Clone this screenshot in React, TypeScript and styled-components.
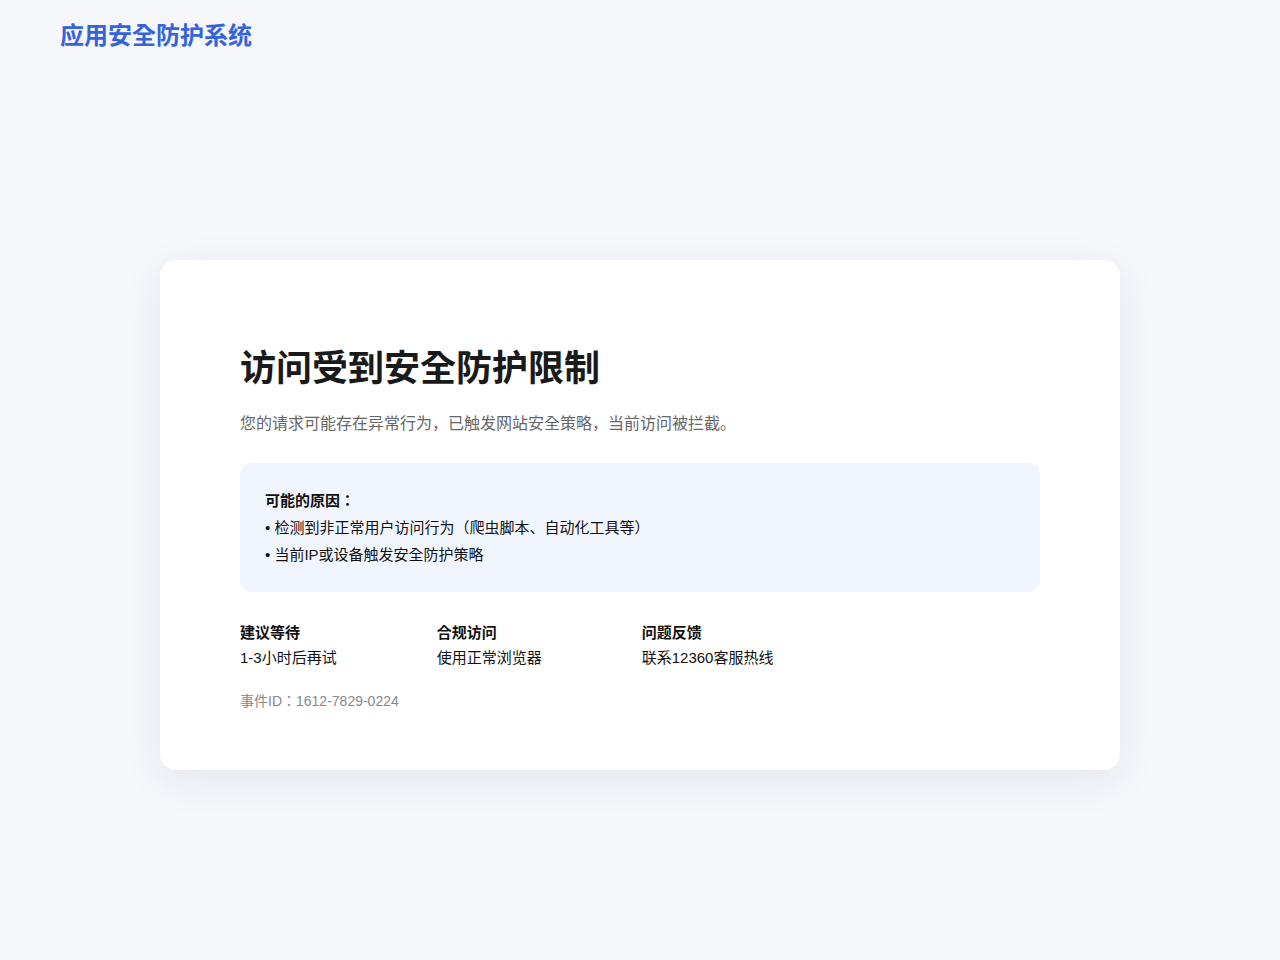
import React from "react";
import styled, { createGlobalStyle } from "styled-components";

const Global = createGlobalStyle`
  html, body { margin: 0; padding: 0; }
  body {
    background: #f5f7fb;
    font-family: "Liberation Sans", Arial, "Noto Sans CJK KR", sans-serif;
    color: #111;
  }
`;

const Page = styled.div`
  min-height: 960px;
  display: flex;
  flex-direction: column;
  box-sizing: border-box;
`;

const Header = styled.header`
  height: 70px;
  padding: 0 60px;
  display: flex;
  align-items: center;
  box-sizing: border-box;
`;

const Logo = styled.div`
  font-size: 24px;
  font-weight: 700;
  color: #3563d9;
  margin-top: -3px;
`;

const Main = styled.main`
  flex: 1;
  display: flex;
  align-items: center;
  justify-content: center;
`;

const Card = styled.section`
  width: 960px;
  box-sizing: border-box;
  background: #fff;
  border-radius: 16px;
  box-shadow: 0 10px 40px rgba(30, 40, 80, 0.08);
  padding: 84px 80px 58px;
`;

const Title = styled.h1`
  margin: 0;
  font-size: 36px;
  font-weight: 700;
  line-height: 50px;
  color: #1a1a1a;
`;

const Subtitle = styled.p`
  margin: 18px 0 0;
  font-size: 16px;
  line-height: 24px;
  color: #666;
`;

const InfoBox = styled.div`
  margin-top: 27px;
  background: #f1f5fe;
  border-radius: 12px;
  padding: 24px 25px 24px;
  font-size: 15px;
  line-height: 27px;
  color: #111;
`;

const InfoTitle = styled.div`
  font-weight: 700;
`;

const Stats = styled.div`
  margin-top: 28px;
  display: flex;
  gap: 100px;
`;

const Stat = styled.div`
  display: flex;
  flex-direction: column;
  font-size: 15px;
  line-height: 25px;
`;

const StatLabel = styled.div`
  font-weight: 700;
`;

const EventId = styled.div`
  margin-top: 20px;
  font-size: 14px;
  line-height: 22px;
  color: #888;
`;

const stats = [
  { label: "建议等待", value: "1-3小时后再试" },
  { label: "合规访问", value: "使用正常浏览器" },
  { label: "问题反馈", value: "联系12360客服热线" },
];

export default function App() {
  return (
    <Page>
      <Global />
      <Header>
        <Logo>应用安全防护系统</Logo>
      </Header>
      <Main>
        <Card>
          <Title>访问受到安全防护限制</Title>
          <Subtitle>您的请求可能存在异常行为，已触发网站安全策略，当前访问被拦截。</Subtitle>
          <InfoBox>
            <InfoTitle>可能的原因：</InfoTitle>
            <div>• 检测到非正常用户访问行为（爬虫脚本、自动化工具等）</div>
            <div>• 当前IP或设备触发安全防护策略</div>
          </InfoBox>
          <Stats>
            {stats.map((s) => (
              <Stat key={s.label}>
                <StatLabel>{s.label}</StatLabel>
                <div>{s.value}</div>
              </Stat>
            ))}
          </Stats>
          <EventId>事件ID：1612-7829-0224</EventId>
        </Card>
      </Main>
    </Page>
  );
}
